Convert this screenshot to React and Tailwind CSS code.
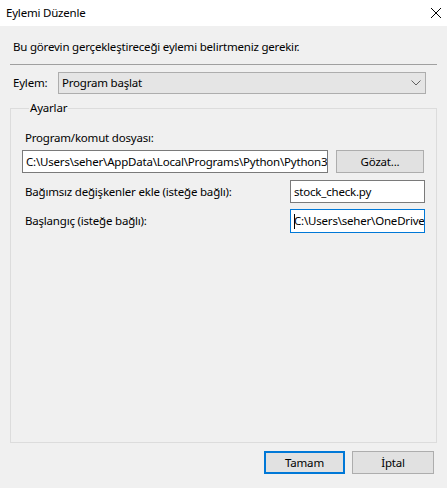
import React from 'react';

const font = { fontFamily: '"Noto Sans", "Liberation Sans", sans-serif' };

const TextBox = ({ value, focused = false, className = '' }) => (
  <div
    className={`shrink-0 h-[23px] bg-white border flex items-center overflow-hidden whitespace-nowrap pl-[3px] ${focused ? 'border-[#0078d7]' : 'border-[#7a7a7a]'} ${className}`}
  >
    {focused && <span className="w-px h-[15px] bg-black -mr-px shrink-0" />}
    <span>{value}</span>
  </div>
);

const Button = ({ label, primary = false, className = 'w-[82px]' }) => (
  <button
    className={`shrink-0 h-[23px] bg-[#e1e1e1] flex items-center justify-center ${primary ? 'border-2 border-[#0078d7]' : 'border border-[#adadad]'} ${className}`}
  >
    {label}
  </button>
);

export default function App() {
  return (
    <div className="w-[447px] h-[488px] flex flex-col text-[11.5px] tracking-[-0.2px] text-black leading-[16px]" style={font}>
      <div className="h-[26px] bg-white flex items-center justify-between pl-[6px] pr-[5px] shrink-0">
        <span>Eylemi Düzenle</span>
        <svg width="12" height="12" viewBox="0 0 12 12">
          <path d="M1 1 L11 11 M11 1 L1 11" stroke="#000" strokeWidth="1" />
        </svg>
      </div>

      <div className="flex-1 bg-[#f0f0f0] flex flex-col px-[10px]">
        <p className="pt-[13px] pl-[3px]">Bu görevin gerçekleştireceği eylemi belirtmeniz gerekir.</p>
        <div className="mt-[9px] h-px bg-[#a0a0a0]" />

        <div className="mt-[7px] flex items-center">
          <span className="pl-[3px] w-[48px]">Eylem:</span>
          <div className="w-[368px] h-[22px] bg-[#e5e5e5] border border-[#adadad] flex items-center justify-between pl-[3px] pr-[4px]">
            <span>Program başlat</span>
            <svg width="10" height="6" viewBox="0 0 10 6">
              <path d="M0.5 0.5 L5 5 L9.5 0.5" fill="none" stroke="#606060" strokeWidth="1" />
            </svg>
          </div>
        </div>

        <fieldset className="mt-[6px] h-[343px] border border-[#dcdcdc] pl-[11px] pr-[12px] min-w-0">
          <legend className="ml-[7px] px-[1px]">Ayarlar</legend>
          <p className="pt-[14px] pl-[3px]">Program/komut dosyası:</p>
          <div className="mt-[4px] flex items-center">
            <TextBox value="C:\Users\seher\AppData\Local\Programs\Python\Python311\python.exe" className="w-[306px]" />
            <div className="ml-[8px]">
              <Button label="Gözat..." className="w-[88px]" />
            </div>
          </div>

          <div className="mt-[7px] flex items-center">
            <span className="pl-[3px] w-[268px] shrink-0 whitespace-nowrap">Bağımsız değişkenler ekle (isteğe bağlı):</span>
            <TextBox value="stock_check.py" className="w-[135px] h-[22px]" />
          </div>

          <div className="mt-[6px] flex items-center">
            <span className="pl-[3px] w-[268px] shrink-0 whitespace-nowrap">Başlangıç (isteğe bağlı):</span>
            <TextBox value="C:\Users\seher\OneDrive\Masaüstü" focused className="w-[135px] h-[24px]" />
          </div>
        </fieldset>

        <div className="mt-[8px] flex justify-end gap-[7px] pr-[3px]">
          <Button label="Tamam" primary className="w-[81px] h-[22px]" />
          <Button label="İptal" className="w-[82px] h-[22px]" />
        </div>
      </div>
    </div>
  );
}
